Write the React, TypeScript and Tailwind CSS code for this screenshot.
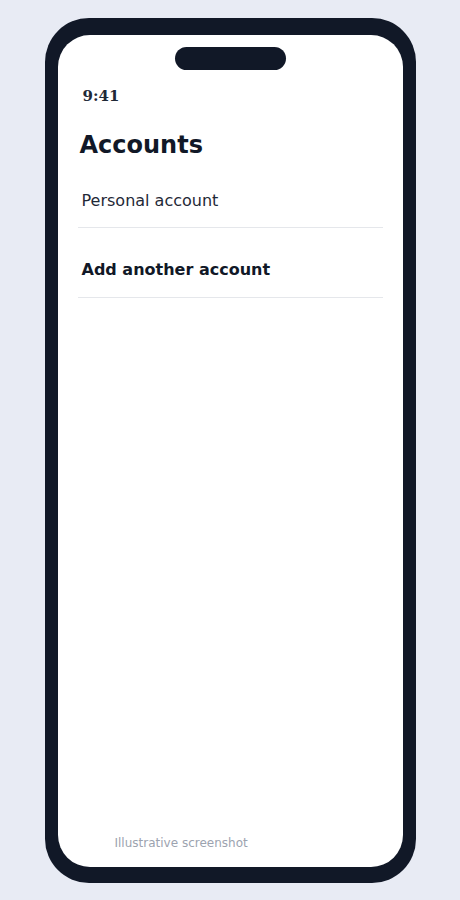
export default function App() {
  return (
    <div className="min-h-[900px] bg-[#e8ebf4] pt-[18px] pb-[17px] font-['DejaVu_Sans',sans-serif]">
      {/* phone frame */}
      <div className="mx-auto w-[371px] h-[865px] rounded-[44px] bg-[#111827] pt-[17px] pb-[16px] px-[13px]">
        <div className="flex h-full flex-col rounded-[32px] bg-white">
          <div className="flex justify-center pt-[12px]">
            <div className="h-[23px] w-[111px] rounded-full bg-[#111827]" />
          </div>

          <div className="mt-[16px] px-[25px] font-['DejaVu_Serif',serif] text-[15px] leading-[20px] font-bold text-[#1f2937]">
            9:41
          </div>

          <h1 className="mt-[23px] px-[22px] text-[24px] leading-[32px] font-bold text-[#111827]">
            Accounts
          </h1>

          <ul className="px-[20px]">
            <li className="border-b border-[#e5e7eb] px-[4px] pt-[28px] pb-[14px] text-[16px] leading-[24px] text-[#1f2937]">
              Personal account
            </li>
            <li className="border-b border-[#e5e7eb] px-[4px] pt-[30px] pb-[15px] text-[16px] leading-[24px] font-bold text-[#111827]">
              Add another account
            </li>
          </ul>

          <div className="flex-1" />

          <div className="pl-[57px] pb-[16px] text-[12px] leading-[16px] text-[#9ca3af]">
            Illustrative screenshot
          </div>
        </div>
      </div>
    </div>
  );
}
